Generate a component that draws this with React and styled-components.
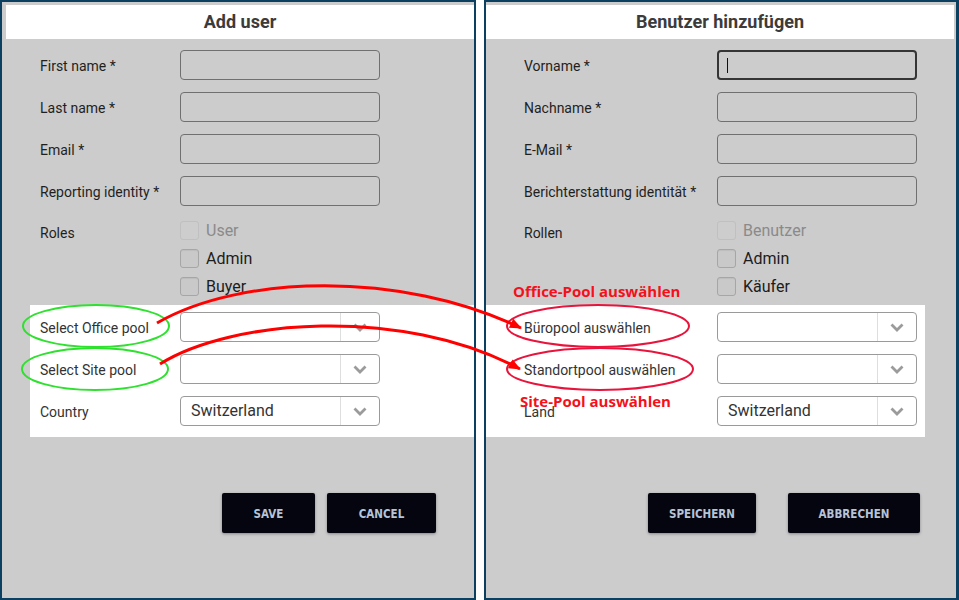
import React from 'react';
import styled, { createGlobalStyle } from 'styled-components';

const Global = createGlobalStyle`
  html, body { margin: 0; padding: 0; background: #fff; }
  body { font-family: Roboto, "Liberation Sans", sans-serif; }
`;

const Stage = styled.div`
  position: relative;
  width: 959px;
  height: 600px;
  display: flex;
  gap: 8px;
  background: #fff;
  overflow: hidden;
`;

const Panel = styled.section`
  box-sizing: border-box;
  width: ${(p) => p.$w}px;
  height: 600px;
  border: 2px solid #0b4061;
  border-right-width: ${(p) => p.$br}px;
  background: #cccccc;
  display: flex;
  flex-direction: column;
`;

const Header = styled.header`
  height: 34px;
  margin: 3px ${(p) => p.$mr}px 0 ${(p) => p.$ml}px;
  background: #fff;
  display: flex;
  align-items: center;
  justify-content: center;
  font: 700 18px Roboto, "Liberation Sans", sans-serif;
  color: #3b3b3b;
  padding-bottom: 2px;
  box-sizing: border-box;
`;

const Fields = styled.div`
  display: flex;
  flex-direction: column;
  gap: 12px;
  padding: 11px 0 0 38px;
`;

const Row = styled.div`
  display: grid;
  grid-template-columns: ${(p) => p.$label}px 200px;
  align-items: center;
  height: 30px;
`;

const Label = styled.label`
  font-size: 14px;
  line-height: 20px;
  padding-top: 1px;
  color: ${(p) => (p.$soft ? '#333' : '#1f1f1f')};
`;

const TextBox = styled.div`
  box-sizing: border-box;
  width: 200px;
  height: 30px;
  border: ${(p) => (p.$focused ? '2px solid #353535' : '1px solid #707070')};
  border-radius: 4px;
  display: flex;
  align-items: center;
  padding-left: 8px;
`;

const Caret = styled.span`
  width: 1px;
  height: 15px;
  background: #111;
`;

const RolesRow = styled.div`
  display: grid;
  grid-template-columns: ${(p) => p.$label}px auto;
  margin-top: 10px;
  padding-left: 38px;
`;

const RolesLabel = styled(Label)`
  padding-top: 7px;
`;

const CheckList = styled.div`
  display: flex;
  flex-direction: column;
`;

const CheckItem = styled.div`
  height: 28px;
  display: flex;
  align-items: center;
  gap: 7px;
  font-size: 16px;
  color: ${(p) => (p.$disabled ? '#8a8a8a' : '#1c1c1c')};
`;

const Box = styled.span`
  box-sizing: border-box;
  width: 19px;
  height: 19px;
  border-radius: 3px;
  border: 1px solid ${(p) => (p.$disabled ? '#c0c0c0' : '#a6a6a6')};
  background: ${(p) => (p.$disabled ? '#cdcdcd' : '#c9c9c9')};
  box-shadow: ${(p) => (p.$disabled ? 'none' : 'inset 0 1px 1px rgba(0,0,0,0.06)')};
`;

const WhiteBox = styled.div`
  margin: 5px ${(p) => p.$mr}px 0 ${(p) => p.$ml}px;
  background: #fff;
  padding: 7px 0 11px ${(p) => p.$pl}px;
  display: flex;
  flex-direction: column;
  gap: 12px;
`;

const Select = styled.div`
  box-sizing: border-box;
  width: 200px;
  height: 30px;
  background: #fff;
  border: 1px solid #9a9a9a;
  border-radius: 4px;
  display: flex;
`;

const SelectValue = styled.div`
  flex: 1;
  padding-left: 10px;
  display: flex;
  align-items: center;
  font-size: 16px;
  color: #333;
  padding-bottom: 1px;
`;

const SelectToggle = styled.div`
  width: 38px;
  border-left: 1px solid #dedede;
  display: flex;
  align-items: center;
  justify-content: center;
`;

const Actions = styled.div`
  display: flex;
  justify-content: flex-end;
  gap: ${(p) => p.$gap}px;
  margin-top: 56px;
  padding-right: ${(p) => p.$pr}px;
`;

const Button = styled.button`
  width: ${(p) => p.$w}px;
  height: 40px;
  border: 0;
  border-radius: 2px;
  background: #04050f;
  color: #b7c3d6;
  font-family: "DejaVu Sans Condensed", "DejaVu Sans", sans-serif;
  font-stretch: condensed;
  font-weight: 700;
  font-size: 11.5px;
  padding: 2px 0 0;
  box-shadow: 0 1px 3px rgba(0, 0, 0, 0.35);
`;

const Overlay = styled.svg`
  position: absolute;
  left: 0;
  top: 0;
  pointer-events: none;
`;

const Callout = styled.span`
  position: absolute;
  left: ${(p) => p.$x}px;
  top: ${(p) => p.$y}px;
  font-family: "Open Sans", sans-serif;
  font-weight: 700;
  font-size: 15px;
  line-height: 18px;
  color: #f5101a;
  white-space: nowrap;
`;

const Chevron = () => (
  <svg width="14" height="9" viewBox="0 0 14 9">
    <polyline points="1.5,1.5 7,7 12.5,1.5" fill="none" stroke="#9b9b9b" strokeWidth="2.8" />
  </svg>
);

const Dropdown = ({ value }) => (
  <Select>
    <SelectValue>{value}</SelectValue>
    <SelectToggle>
      <Chevron />
    </SelectToggle>
  </Select>
);

const UserForm = ({ t, side }) => {
  const left = side === 'left';
  const col = left ? 140 : 193;
  return (
    <Panel $w={left ? 476 : 475} $br={left ? 2 : 3}>
      <Header $ml={left ? 4 : 0} $mr={left ? 0 : 2}>{t.title}</Header>
      <Fields>
        {t.fields.map((f, i) => (
          <Row key={f} $label={col}>
            <Label>{f}</Label>
            <TextBox $focused={!left && i === 0}>{!left && i === 0 && <Caret />}</TextBox>
          </Row>
        ))}
      </Fields>
      <RolesRow $label={col}>
        <RolesLabel>{t.roles}</RolesLabel>
        <CheckList>
          {t.roleItems.map((r, i) => (
            <CheckItem key={r} $disabled={i === 0}>
              <Box $disabled={i === 0} />
              {r}
            </CheckItem>
          ))}
        </CheckList>
      </RolesRow>
      <WhiteBox $ml={left ? 28 : 0} $mr={left ? 0 : 31} $pl={left ? 10 : 38}>
        {t.pools.map((p, i) => (
          <Row key={p} $label={col}>
            <Label $soft>{p}</Label>
            <Dropdown value={i === 2 ? 'Switzerland' : ''} />
          </Row>
        ))}
      </WhiteBox>
      <Actions $gap={left ? 12 : 32} $pr={left ? 38 : 36}>
        <Button $w={left ? 93 : 108}>{t.save}</Button>
        <Button $w={left ? 109 : 132}>{t.cancel}</Button>
      </Actions>
    </Panel>
  );
};

const en = {
  title: 'Add user',
  fields: ['First name *', 'Last name *', 'Email *', 'Reporting identity *'],
  roles: 'Roles',
  roleItems: ['User', 'Admin', 'Buyer'],
  pools: ['Select Office pool', 'Select Site pool', 'Country'],
  save: 'SAVE',
  cancel: 'CANCEL',
};

const de = {
  title: 'Benutzer hinzufügen',
  fields: ['Vorname *', 'Nachname *', 'E-Mail *', 'Berichterstattung identität *'],
  roles: 'Rollen',
  roleItems: ['Benutzer', 'Admin', 'Käufer'],
  pools: ['Büropool auswählen', 'Standortpool auswählen', 'Land'],
  save: 'SPEICHERN',
  cancel: 'ABBRECHEN',
};

export default function App() {
  return (
    <>
      <Global />
      <Stage>
        <UserForm t={en} side="left" />
        <UserForm t={de} side="right" />
        <Overlay width="959" height="600" viewBox="0 0 959 600">
          <defs>
            <marker
              id="tip"
              viewBox="0 0 12 10"
              refX="11"
              refY="5"
              markerUnits="userSpaceOnUse"
              markerWidth="13"
              markerHeight="10"
              orient="auto"
            >
              <path d="M0,0 L12,5 L0,10 z" fill="#f00" />
            </marker>
          </defs>
          <ellipse cx="96" cy="326" rx="73" ry="21" fill="none" stroke="#2fe12f" strokeWidth="2" />
          <ellipse cx="95" cy="369" rx="73" ry="21" fill="none" stroke="#2fe12f" strokeWidth="2" />
          <ellipse cx="598" cy="326" rx="91" ry="21" fill="none" stroke="#e8143c" strokeWidth="2" />
          <ellipse cx="600" cy="369" rx="93" ry="21" fill="none" stroke="#e8143c" strokeWidth="2" />
          <path d="M157,323 C240,275 400,270 521,328" fill="none" stroke="#f00" strokeWidth="3" markerEnd="url(#tip)" />
          <path d="M160,364 C230,320 400,305 520,369" fill="none" stroke="#f00" strokeWidth="3" markerEnd="url(#tip)" />
        </Overlay>
        <Callout $x={513} $y={282}>Office-Pool auswählen</Callout>
        <Callout $x={520} $y={392}>Site-Pool auswählen</Callout>
      </Stage>
    </>
  );
}
